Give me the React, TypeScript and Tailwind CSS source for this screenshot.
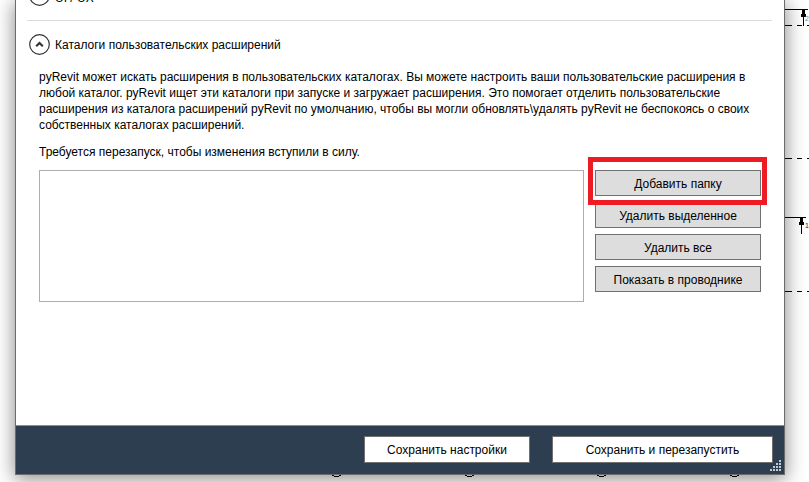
import React from "react";

const circles = [336, 469, 601, 734];
const sideActions = ["Добавить папку", "Удалить выделенное", "Удалить все", "Показать в проводнике"];

function DrawingBackdrop() {
  return (
    <svg className="absolute inset-0 h-full w-full" aria-hidden="true" shapeRendering="crispEdges">
      <g fill="none" stroke="#000">
        <path d="M784 9.5h24M784 217.5h22" />
        <path d="M784 25.5h8m5 0h5m5 0h5M784 158.5h8m5 0h5m5 0h5M784 291.5h8m5 0h5m5 0h5" />
        <path d="M803.5 10v16M801.5 218v16" />
      </g>
      <path d="M802 10h3v4h1v3h-5v-3h1zM800 218h3v4h1v3h-5v-3h1z" fill="#000" />
      <g fill="none" stroke="#000">
        {circles.map((x) => (
          <circle key={x} cx={x + 0.5} cy="467.5" r="9" />
        ))}
      </g>
      <text x="805" y="21" fontSize="7" fill="#888">2</text>
      <text x="805" y="228" fontSize="7" fill="#222">1</text>
    </svg>
  );
}

function Toggle({ label, alignEnd = false }: { label: string; alignEnd?: boolean }) {
  return (
    <button type="button" className={`flex h-[21px] gap-[5px] text-left ${alignEnd ? "items-end" : "items-center"}`}>
      <svg width="21" height="21" viewBox="0 0 21 21" fill="none" aria-hidden="true">
        <circle cx="10.5" cy="10.5" r="9.8" stroke="#333" strokeWidth="1.2" />
        <path d="M7.2 12.2l3.3-3.2 3.3 3.2" stroke="#333" strokeWidth="2.2" />
      </svg>
      <span>{label}</span>
    </button>
  );
}

export default function App() {
  return (
    <div className="relative h-screen overflow-hidden bg-white font-['Liberation_Sans',Arial,sans-serif] text-[12px] leading-4 text-black">
      <DrawingBackdrop />
      <div className="relative flex h-full pr-6 pb-[7px] pl-[15px]">
        <main className="flex min-w-0 flex-1 flex-col border-x border-b border-[#6b6b6b] bg-white shadow-[0_3px_18px_1px_rgba(0,0,0,0.45)]">
          <section className="-mt-[15px] mr-3 ml-[11px] border-b border-[#d8dcdc] px-[2px] pb-[14px]">
            <Toggle label="UI / UX" alignEnd />
          </section>
          <section className="flex-1 px-[13px] pt-[13px]">
            <Toggle label="Каталоги пользовательских расширений" />
            <div className="px-[10px]">
              <p className="mt-[14px]">
                pyRevit может искать расширения в пользовательских каталогах. Вы можете настроить ваши пользовательские расширения в
                любой каталог. pyRevit ищет эти каталоги при запуске и загружает расширения. Это помогает отделить пользовательские
                расширения из каталога расширений pyRevit по умолчанию, чтобы вы могли обновлять\удалять pyRevit не беспокоясь о своих
                собственных каталогах расширений.
              </p>
              <p className="mt-[11px]">Требуется перезапуск, чтобы изменения вступили в силу.</p>
              <div className="mt-[10px] flex gap-[11px]">
                <div role="listbox" aria-label="Каталоги" className="h-[132px] flex-1 border border-[#abadb3]" />
                <div className="flex w-[166px] flex-col gap-[6px]">
                  {sideActions.map((label, i) => (
                    <div key={label} className="relative">
                      <button type="button" className="h-[26px] w-full border border-[#707070] bg-[#ddd] pt-px">
                        {label}
                      </button>
                      {i === 0 && (
                        <span className="pointer-events-none absolute -top-[13px] -right-[6px] -bottom-[9px] -left-[7px] z-10 border-[5px] border-[#ed1c24]" />
                      )}
                    </div>
                  ))}
                </div>
              </div>
            </div>
          </section>
          <footer className="relative flex h-[49px] justify-end gap-[22px] border-t border-[#8593a0] bg-[#2c3e50] pt-[10px] pr-[11px]">
            <button type="button" className="h-[27px] w-[166px] border border-[#707070] bg-white pt-px">Сохранить настройки</button>
            <button type="button" className="h-[27px] w-[221px] border border-[#707070] bg-white pt-px">Сохранить и перезапустить</button>
            <svg className="absolute right-[2px] bottom-[2px]" width="12" height="12" fill="#c3cad2" aria-hidden="true">
              {[0, 1, 2, 3].flatMap((c) =>
                Array.from({ length: c + 1 }, (_, r) => (
                  <rect key={`${c}-${r}`} x={c * 3} y={9 - r * 3} width="2" height="2" />
                )),
              )}
            </svg>
          </footer>
        </main>
      </div>
    </div>
  );
}
